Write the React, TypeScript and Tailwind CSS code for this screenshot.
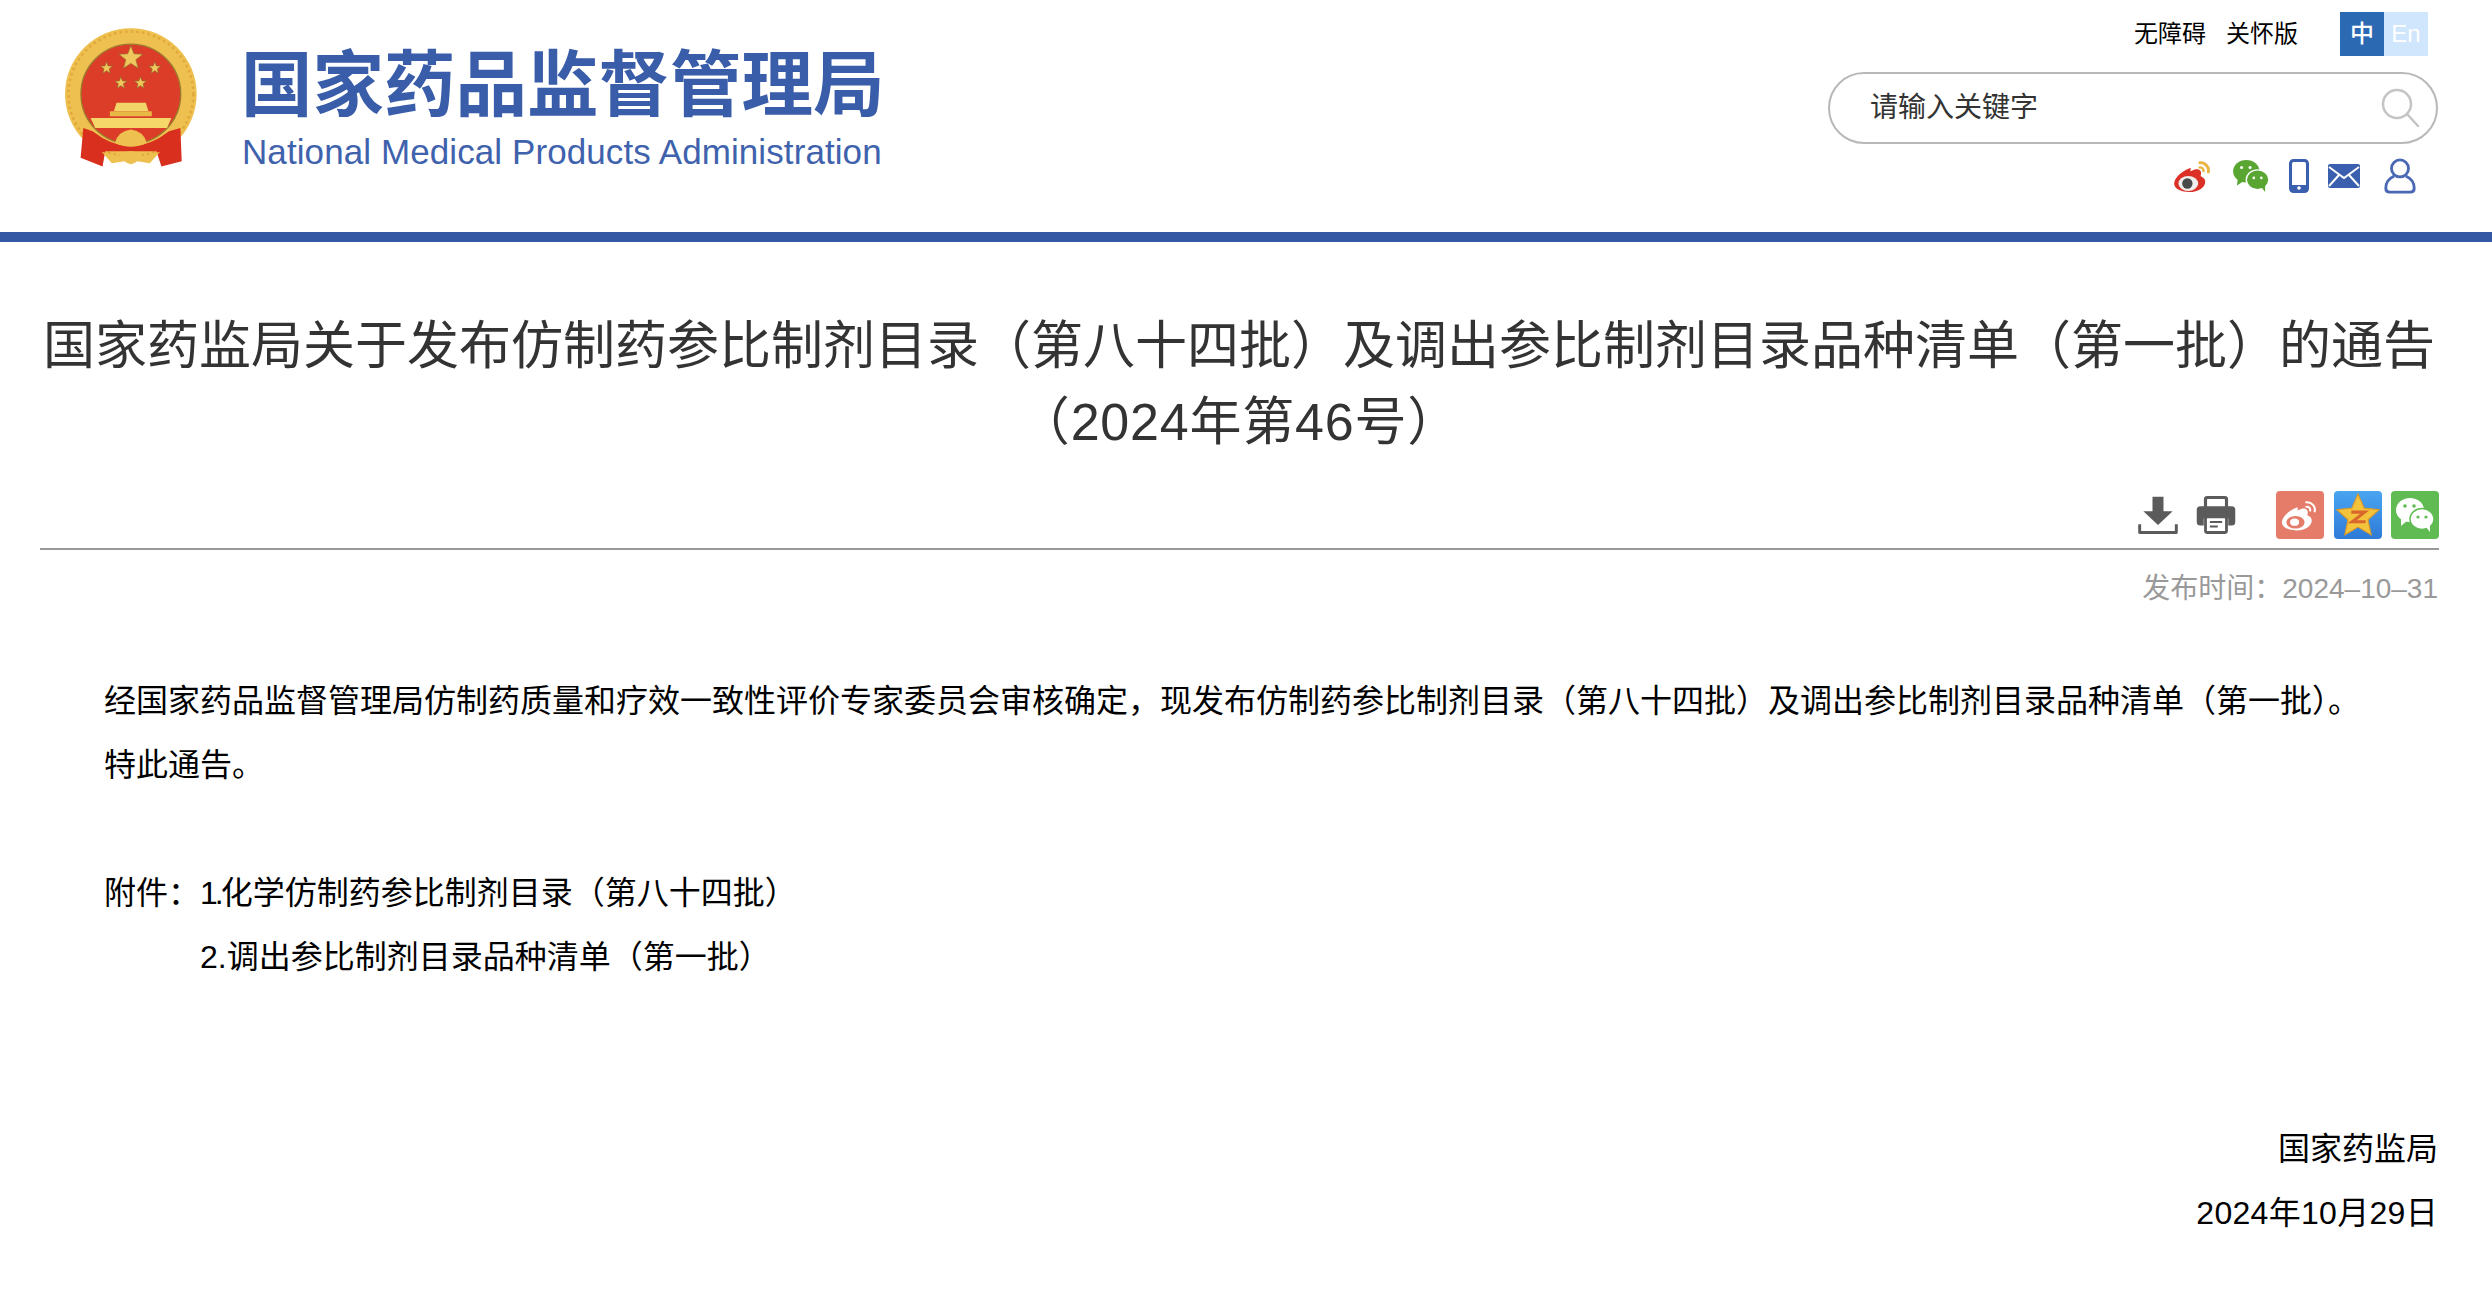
const SANS = "font-['Helvetica_Neue','Liberation_Sans','Noto_Sans_CJK_SC',sans-serif]";

function Emblem() {
  const star = (cx: number, cy: number, r: number) => {
    const pts = [];
    for (let i = 0; i < 10; i++) {
      const rad = i % 2 === 0 ? r : r * 0.42;
      const a = -Math.PI / 2 + (i * Math.PI) / 5;
      pts.push(`${cx + rad * Math.cos(a)},${cy + rad * Math.sin(a)}`);
    }
    return <polygon points={pts.join(" ")} fill="#efc75c" stroke="#8f6a2a" strokeWidth="2" />;
  };
  return (
    <svg width="133" height="140" viewBox="45 40 400 420" className="shrink-0">
      <circle cx="243" cy="238" r="198" fill="#eec04f" />
      <circle cx="243" cy="238" r="188" fill="none" stroke="#e2a93c" strokeWidth="8" strokeDasharray="8 9" />
      <circle cx="243" cy="238" r="150" fill="#db3d28" stroke="#9b7a2e" strokeWidth="4" />
      {star(243, 130, 38)}
      {star(170, 160, 19)}
      {star(315, 160, 19)}
      {star(213, 205, 19)}
      {star(272, 205, 19)}
      <path d="M200 264 H288 L296 290 H192 Z" fill="#f3d469" />
      <rect x="180" y="290" width="126" height="15" fill="#e9b945" />
      <path d="M122 310 H365 L352 340 H136 Z" fill="#f5d669" />
      <path d="M100 340 L128 350 Q243 440 358 350 L392 340 L396 440 L335 456 L320 410 H166 L158 456 L92 430 Z" fill="#d92f1e" />
      <path d="M195 385 Q205 350 243 345 Q281 350 291 385 Q243 408 195 385 Z" fill="#eec04f" />
      <path d="M155 412 L205 425 Q243 395 281 425 L331 412 L300 446 L262 440 Q243 458 224 440 L186 446 Z" fill="#eec04f" />
    </svg>
  );
}

function WeiboColor() {
  return (
    <svg width="40" height="32" viewBox="0 0 42 34">
      <path d="M17 9 C8 12 1 20 1 25 C1 31 9 34 17 34 C27 34 34 29 34 23 C34 19 30 18 29 17 C31 12 28 9 23 10 L18 12 C19 9 19 8 17 9 Z" fill="#db3127" />
      <ellipse cx="16" cy="25" rx="10.5" ry="8" fill="#f1eeee" />
      <circle cx="15" cy="25" r="5.5" fill="#4a4a4a" />
      <path d="M27 3 C34 2 39 8 37 14" stroke="#e8b33f" strokeWidth="3" fill="none" />
      <path d="M27 8 C31 7 33 10 32 13" stroke="#e8b33f" strokeWidth="2.5" fill="none" />
    </svg>
  );
}

function WechatColor() {
  return (
    <svg width="38" height="32" viewBox="0 0 40 34">
      <ellipse cx="15" cy="12" rx="14" ry="12" fill="#5aa632" />
      <path d="M6 20 L5 27 L13 22 Z" fill="#5aa632" />
      <ellipse cx="27" cy="21" rx="12" ry="10.5" fill="#5aa632" stroke="#fff" strokeWidth="1.5" />
      <path d="M31 29 L35 34 L35 26 Z" fill="#5aa632" />
      <circle cx="10" cy="8" r="1.6" fill="#fff" />
      <circle cx="19" cy="8" r="1.6" fill="#fff" />
      <circle cx="23" cy="19" r="1.4" fill="#fff" />
      <circle cx="31" cy="19" r="1.4" fill="#fff" />
    </svg>
  );
}

function TopIcons() {
  return (
    <div className="flex items-center justify-end h-[36px] mt-[14px] pr-[21px]">
      <WeiboColor />
      <div className="ml-[19px]"><WechatColor /></div>
      <svg className="ml-[19px]" width="20" height="34" viewBox="0 0 20 34">
        <rect x="1.5" y="1.5" width="17" height="31" rx="3" fill="#fff" stroke="#3a5fae" strokeWidth="3" />
        <rect x="1" y="26" width="18" height="7" rx="2" fill="#3a5fae" />
        <circle cx="10" cy="29" r="1.8" fill="#fff" />
      </svg>
      <svg className="ml-[19px]" width="32" height="24" viewBox="0 0 32 24">
        <rect width="32" height="24" rx="2" fill="#3a5fae" />
        <path d="M1 3 L16 14 L31 3 M1 22 L11 11 M31 22 L21 11" stroke="#fff" strokeWidth="2" fill="none" />
      </svg>
      <svg className="ml-[23px]" width="34" height="36" viewBox="0 0 34 38" fill="none" stroke="#4a68b4" strokeWidth="3">
        <circle cx="17" cy="11" r="9" />
        <path d="M11 19 C4 22 2 28 2 32 C2 35 4 36 6 36 H28 C30 36 32 35 32 32 C32 28 30 22 23 19" />
      </svg>
    </div>
  );
}

function ShareIcons() {
  return (
    <div className="flex items-center justify-end h-[48px] gap-[9px]">
      <svg width="44" height="44" viewBox="0 0 24 24" fill="#5b5b5b" className="mr-[6px]">
        <path d="M9 2 H15 V10 H20 L12 17.5 L4 10 H9 Z" />
        <path d="M2 17 V21.5 H22 V17" fill="none" stroke="#5b5b5b" strokeWidth="1.6" strokeLinejoin="round" />
      </svg>
      <svg width="42" height="42" viewBox="0 0 24 24" className="mr-[30px]">
        <path d="M6 8 V3 Q6 2 7 2 H17 Q18 2 18 3 V8" fill="none" stroke="#5b5b5b" strokeWidth="1.8" />
        <path d="M3 7 H21 Q23 7 23 9 V16 Q23 18 21 18 H19 V14 H5 V18 H3 Q1 18 1 16 V9 Q1 7 3 7 Z" fill="#5b5b5b" />
        <rect x="6" y="13" width="12" height="9" rx="1" fill="#fff" stroke="#5b5b5b" strokeWidth="1.6" />
        <path d="M8.5 16 H15.5 M8.5 18.6 H13" stroke="#5b5b5b" strokeWidth="1.2" />
      </svg>
      <div className="w-[48px] h-[48px] rounded-[4px] bg-[#e57b69] flex items-center justify-center mr-[1px]">
        <svg width="38" height="32" viewBox="0 0 42 34">
          <path d="M17 9 C8 12 1 20 1 25 C1 31 9 34 17 34 C27 34 34 29 34 23 C34 19 30 18 29 17 C31 12 28 9 23 10 L18 12 C19 9 19 8 17 9 Z" fill="#fff" />
          <ellipse cx="16" cy="25" rx="10" ry="7" fill="#e57b69" />
          <ellipse cx="15" cy="25" rx="5" ry="4" fill="#fff" />
          <path d="M27 3 C34 2 39 8 37 14 M27 8 C31 7 33 10 32 13" stroke="#fff" strokeWidth="2.2" fill="none" />
        </svg>
      </div>
      <div className="w-[48px] h-[48px] rounded-[4px] bg-[linear-gradient(#49a5f0,#2f7ad8)] flex items-center justify-center">
        <svg width="46" height="46" viewBox="0 0 24 24">
          <path d="M12 1 L15.2 8.4 L23 9.2 L17.2 14.5 L18.9 22.4 L12 18.3 L5.1 22.4 L6.8 14.5 L1 9.2 L8.8 8.4 Z" fill="#f4c33c" stroke="#d99a2b" strokeWidth="0.6" />
          <path d="M8.5 10.5 H15.5 L9 15.5 H16" stroke="#d9662b" strokeWidth="1.6" fill="none" />
        </svg>
      </div>
      <div className="w-[48px] h-[48px] rounded-[4px] bg-[#5fbb52] flex items-center justify-center">
        <svg width="40" height="34" viewBox="0 0 40 34">
          <ellipse cx="15" cy="12" rx="14" ry="12" fill="#fff" />
          <path d="M6 20 L6 28 L13 22 Z" fill="#fff" />
          <ellipse cx="27" cy="21" rx="12" ry="10.5" fill="#fff" stroke="#5fbb52" strokeWidth="1.5" />
          <path d="M31 29 L35 34 L35 26 Z" fill="#fff" />
          <circle cx="10" cy="8" r="1.8" fill="#5fbb52" />
          <circle cx="19" cy="8" r="1.8" fill="#5fbb52" />
          <circle cx="23" cy="19" r="1.6" fill="#5fbb52" />
          <circle cx="31" cy="19" r="1.6" fill="#5fbb52" />
        </svg>
      </div>
    </div>
  );
}

export default function App() {
  return (
    <div className={`bg-white h-[1290px] overflow-hidden ${SANS}`}>
      <header className="h-[242px] border-b-[10px] border-[#3558a5] flex justify-between px-[54px]">
        <div className="flex items-start pt-[28px] ml-[11px]">
          <Emblem />
          <div className="ml-[43px] mt-[19px]">
            <div className="text-[71.5px] leading-[76px] font-bold text-[#3a5daa] whitespace-nowrap">国家药品监督管理局</div>
            <div className="text-[35px] leading-[40px] tracking-[0.09px] text-[#3f62ad] ml-[1px] mt-[9px] whitespace-nowrap">National Medical Products Administration</div>
          </div>
        </div>
        <div className="w-[610px] mr-0">
          <div className="flex justify-end items-center h-[44px] mt-[12px] pr-[10px]">
            <span className="text-[24px] text-black">无障碍</span>
            <span className="text-[24px] text-black ml-[20px]">关怀版</span>
            <span className="ml-[42px] w-[44px] h-[44px] bg-[#2c69b3] text-white text-[24px] font-medium flex items-center justify-center">中</span>
            <span className="w-[44px] h-[44px] bg-[#d0e6fd] text-white text-[24px] flex items-center justify-center">En</span>
          </div>
          <div className="mt-[16px] h-[72px] rounded-full border-[2px] border-[#b8b8b8] flex items-center justify-between pl-[40px] pr-[14px]">
            <span className="text-[28px] text-[#333]">请输入关键字</span>
            <svg width="42" height="42" viewBox="0 0 42 42" fill="none" stroke="#c4c4c4" strokeWidth="2.5">
              <circle cx="17" cy="17" r="14" />
              <path d="M27 27 L38 39" strokeLinecap="round" />
            </svg>
          </div>
          <TopIcons />
        </div>
      </header>
      <main className="px-[40px] w-[2478px]">
        <h1 className="text-[52px] leading-[76px] text-[#333] text-center font-normal mt-[66px]">
          国家药监局关于发布仿制药参比制剂目录（第八十四批）及调出参比制剂目录品种清单（第一批）的通告<br />
          <span className="tracking-[0.8px]">（2024年第46号）</span>
        </h1>
        <div className="border-b-[2px] border-[#999] mt-[31px] pb-[9px] w-[2399px]">
          <ShareIcons />
        </div>
        <div className="w-[2398px] text-right text-[28px] leading-[40px] text-[#999] mt-[19px]">发布时间：2024–10–31</div>
        <div className="w-[2398px] text-[32px] leading-[64px] text-black mt-[60px]">
          <p className="indent-[64px]">经国家药品监督管理局仿制药质量和疗效一致性评价专家委员会审核确定，现发布仿制药参比制剂目录（第八十四批）及调出参比制剂目录品种清单（第一批）。</p>
          <p className="indent-[64px]">特此通告。</p>
          <p className="h-[64px]"></p>
          <p className="indent-[64px]">附件：<span className="tracking-[-3px]">1.</span>化学仿制药参比制剂目录（第八十四批）</p>
          <p className="pl-[160px]">2.调出参比制剂目录品种清单（第一批）</p>
          <p className="h-[128px]"></p>
          <p className="text-right">国家药监局</p>
          <p className="text-right tracking-[0.3px]">2024年10月29日</p>
        </div>
      </main>
    </div>
  );
}
